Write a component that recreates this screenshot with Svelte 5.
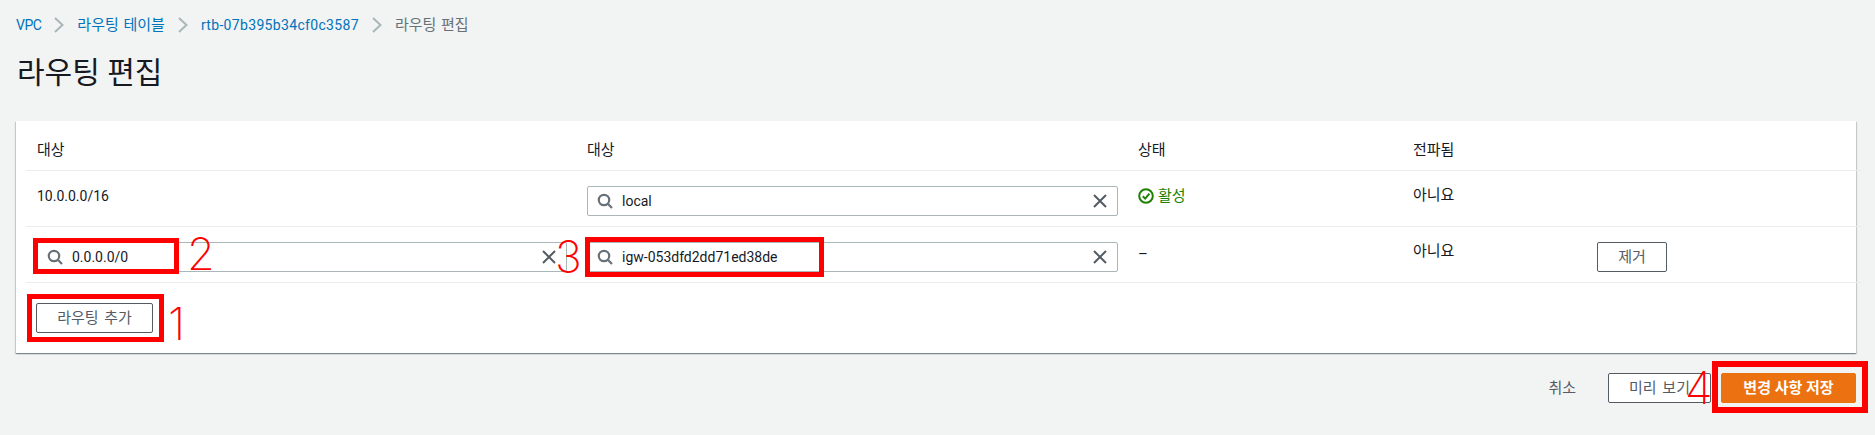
<script>
  const crumbs = [
    { label: 'VPC', kind: 'vpc' },
    { label: '라우팅 테이블', kind: '' },
    { label: 'rtb-07b395b34cf0c3587', kind: 'rtb' }
  ];
</script>

{#snippet searchIcon()}
  <svg class="search" viewBox="0 0 16 16" width="16" height="16" aria-hidden="true"><circle cx="7" cy="7" r="5.2" /><path d="M10.8 10.8 15 15" /></svg>
{/snippet}

{#snippet clearIcon()}
  <svg class="clear" viewBox="0 0 14 14" width="14" height="14" aria-hidden="true"><path d="M1 1 13 13M13 1 1 13" /></svg>
{/snippet}

{#snippet field(value)}
  <div class="field">
    {@render searchIcon()}
    <span class="value">{value}</span>
    {@render clearIcon()}
  </div>
{/snippet}

<div class="page">
  <nav class="crumbs">
    {#each crumbs as crumb}
      <a href="#top" class={crumb.kind}>{crumb.label}</a>
      <svg class="chev" viewBox="0 0 10 16" width="10" height="16" aria-hidden="true"><path d="M1 1 8.5 8 1 15" /></svg>
    {/each}
    <span class="current">라우팅 편집</span>
  </nav>

  <h1>라우팅 편집</h1>

  <section class="card">
    <div class="row head">
      <div>대상</div><div>대상</div><div>상태</div><div>전파됨</div><div></div>
    </div>
    <div class="row">
      <div class="cell latin">10.0.0.0/16</div>
      <div class="slot">{@render field('local')}</div>
      <div class="active">
        <svg viewBox="0 0 16 16" width="16" height="16" aria-hidden="true"><circle cx="8" cy="8" r="6.8" /><path d="M4.8 8.2 7.2 10.6 11.4 5.6" /></svg>
        <span>활성</span>
      </div>
      <div class="cell">아니요</div>
      <div></div>
    </div>
    <div class="row">
      <div class="slot">{@render field('0.0.0.0/0')}</div>
      <div class="slot">{@render field('igw-053dfd2dd71ed38de')}</div>
      <div class="dash">–</div>
      <div class="cell">아니요</div>
      <div><button class="remove">제거</button></div>
    </div>
    <div class="add"><button class="add-btn">라우팅 추가</button></div>
  </section>

  <footer>
    <button class="link">취소</button>
    <button class="preview">미리 보기</button>
    <button class="primary">변경 사항 저장</button>
  </footer>

  <div class="mark m1"></div>
  <div class="mark m2"></div>
  <div class="mark m3"></div>
  <div class="mark m4"></div>
  <span class="num n1">1</span>
  <span class="num n2">2</span>
  <span class="num n3">3</span>
  <span class="num n4">4</span>
</div>

<style>
  :global(body) {
    margin: 0;
    background: #f2f3f3;
  }
  .page {
    position: relative;
    box-sizing: border-box;
    height: 435px;
    overflow: hidden;
    padding: 15px 19px 0 16px;
    background: #f2f3f3;
    color: #16191f;
    font: 15px/20px Roboto, "Noto Sans CJK KR", sans-serif;
  }
  .crumbs {
    display: flex;
    align-items: center;
    height: 20px;
    word-spacing: 1px;
  }
  .crumbs a {
    color: #0073bb;
    text-decoration: none;
  }
  .crumbs .vpc {
    font-size: 14px;
    letter-spacing: -0.5px;
  }
  .crumbs .rtb {
    font-size: 14px;
    letter-spacing: 0.33px;
  }
  .chev {
    margin: 0 13px;
    fill: none;
    stroke: #aab7b8;
    stroke-width: 2;
  }
  .current {
    color: #687078;
  }
  h1 {
    margin: 19px 0 0 1px;
    height: 67px;
    font-size: 30px;
    line-height: 38px;
    font-weight: 400;
  }
  .card {
    background: #fff;
    height: 232px;
    box-shadow: 0 1px 1px 0 rgba(0, 28, 36, 0.3), 1px 1px 1px 0 rgba(0, 28, 36, 0.15), -1px 1px 1px 0 rgba(0, 28, 36, 0.15);
  }
  .row {
    display: grid;
    grid-template-columns: 550px 551px 275px 184px 1fr;
    box-sizing: border-box;
    height: 56px;
    margin: 0 -6px 0 10px;
    padding: 15px 0 0 11px;
    border-bottom: 1px solid #eaeded;
  }
  .head {
    height: 50px;
    padding-top: 19px;
  }
  .slot {
    padding-right: 20px;
  }
  .cell {
    margin-top: -1px;
  }
  .latin {
    font-size: 14px;
    margin-top: 0;
  }
  .dash {
    padding-top: 2px;
  }
  .active {
    display: flex;
    align-items: center;
    gap: 4px;
    height: 20px;
    color: #1d8102;
  }
  .active svg {
    fill: none;
    stroke: #1d8102;
    stroke-width: 2;
  }
  .field {
    display: flex;
    align-items: center;
    box-sizing: border-box;
    height: 30px;
    padding: 0 10px 0 9px;
    background: #fff;
    border: 1px solid #aab7b8;
    border-radius: 2px;
  }
  .search {
    flex: none;
    fill: none;
    stroke: #687078;
    stroke-width: 2.2;
  }
  .value {
    flex: 1;
    margin-left: 9px;
    font-size: 14px;
  }
  .clear {
    flex: none;
    fill: none;
    stroke: #545b64;
    stroke-width: 2;
  }
  button {
    box-sizing: border-box;
    height: 30px;
    padding: 0;
    background: #fff;
    border: 1px solid #545b64;
    border-radius: 2px;
    color: #545b64;
    font: 400 15px/20px Roboto, "Noto Sans CJK KR", sans-serif;
    word-spacing: 2px;
  }
  .remove {
    width: 70px;
  }
  .add {
    padding: 20px 0 0 20px;
  }
  .add-btn {
    width: 117px;
  }
  footer {
    display: flex;
    justify-content: flex-end;
    align-items: center;
    margin-top: 20px;
  }
  .link {
    background: none;
    border: 0;
    margin-right: 32px;
  }
  .preview {
    width: 103px;
    margin-right: 10px;
  }
  .primary {
    width: 135px;
    background: #ec7211;
    border-color: #ec7211;
    color: #fff;
    font-weight: 700;
    word-spacing: 0;
  }
  .mark {
    position: absolute;
    box-sizing: border-box;
    border: 5px solid #f00;
  }
  .m1 { left: 27px; top: 294px; width: 137px; height: 48px; }
  .m2 { left: 33px; top: 238px; width: 146px; height: 36px; }
  .m3 { left: 585px; top: 237px; width: 239px; height: 40px; }
  .m4 { left: 1712px; top: 361px; width: 156px; height: 52px; border-width: 6px; }
  .num {
    position: absolute;
    color: #f00;
    font: 200 45px/1 Inter, sans-serif;
  }
  .n1 { left: 168px; top: 301px; }
  .n2 { left: 187px; top: 231px; }
  .n3 { left: 555px; top: 234px; }
  .n4 { left: 1685px; top: 365px; }
</style>
